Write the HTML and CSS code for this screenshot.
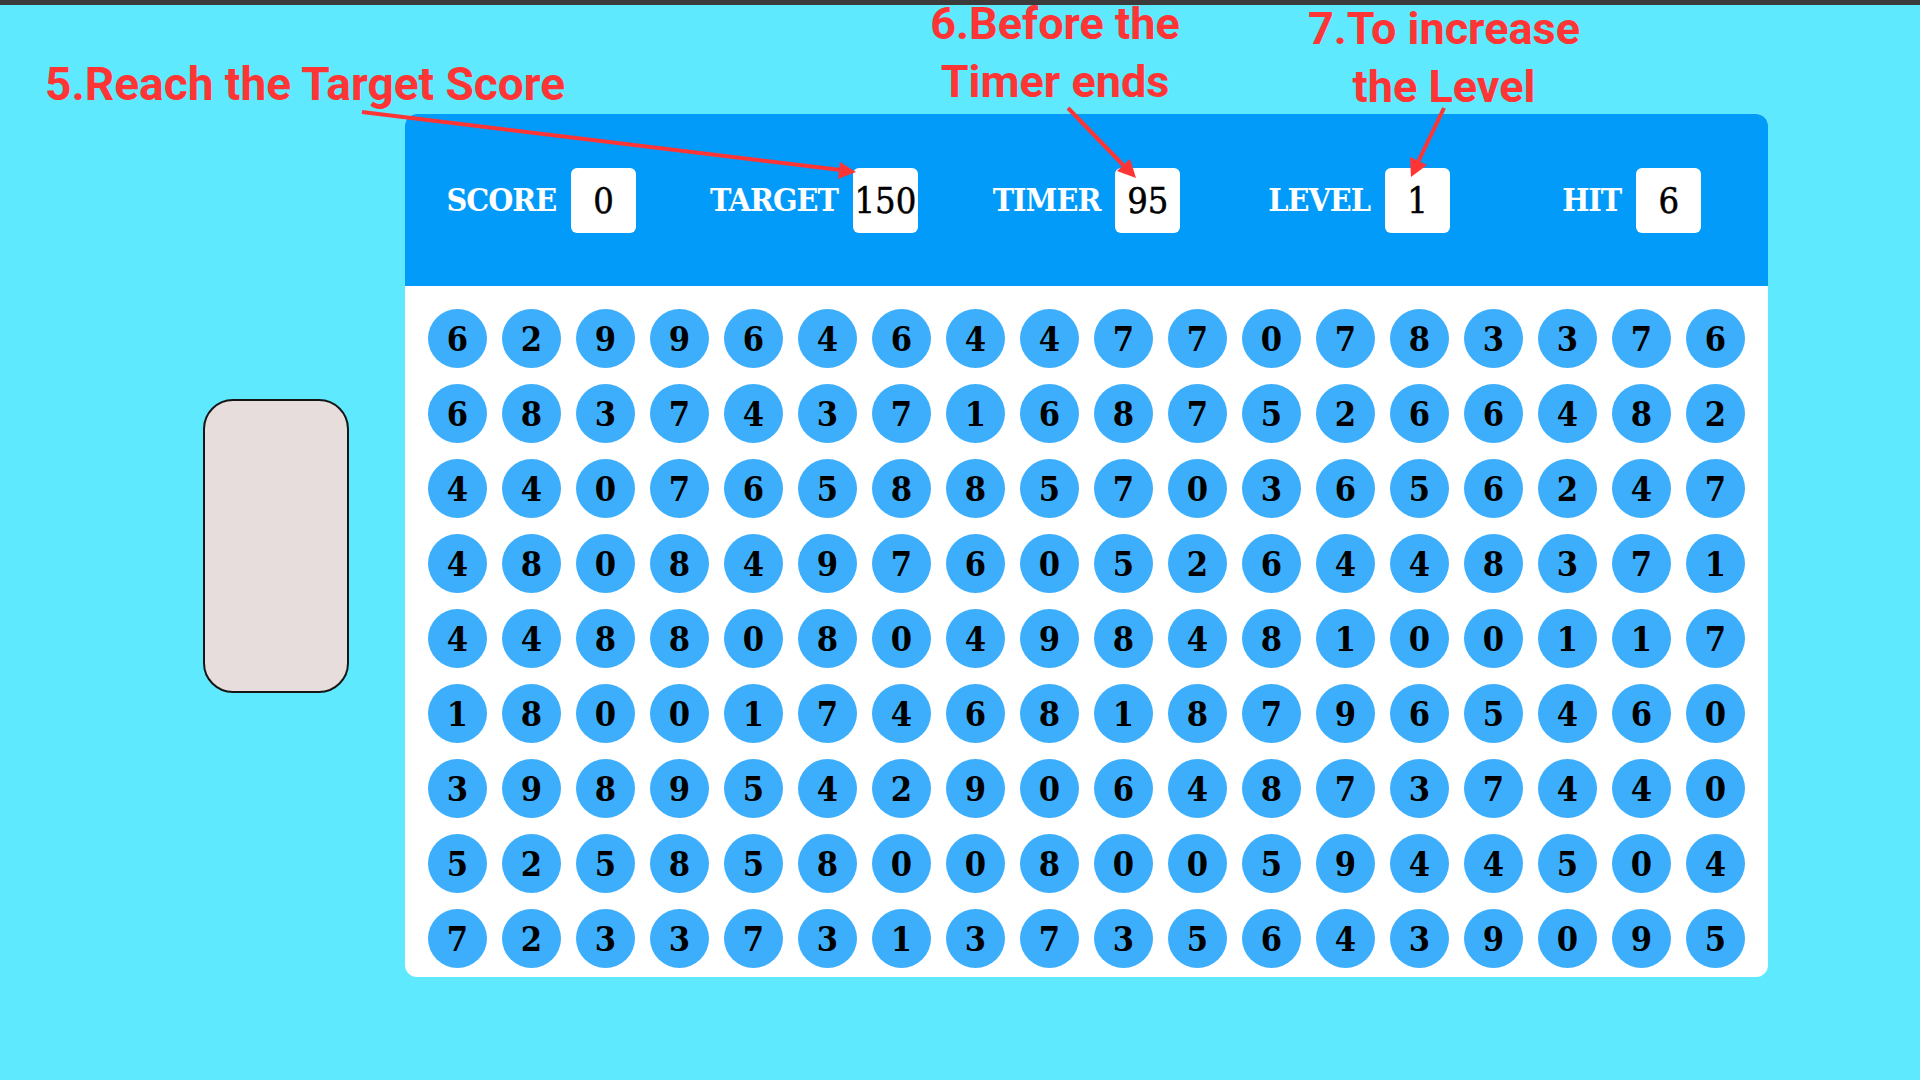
FILE: index.html
```html
<!DOCTYPE html>
<html lang="en">
<head>
  <meta charset="UTF-8" />
  <title>Number Hit</title>
  <link rel="stylesheet" href="styles.css">
</head>
<body>
  <div class="topbar"></div>

  <main class="stage">
    <div class="side-card"></div>

    <section class="board">
      <header class="stats">
        <div class="stat"><span class="stat-label">SCORE</span><span class="stat-value" id="score">0</span></div>
        <div class="stat"><span class="stat-label">TARGET</span><span class="stat-value" id="target">150</span></div>
        <div class="stat"><span class="stat-label">TIMER</span><span class="stat-value" id="timer">95</span></div>
        <div class="stat"><span class="stat-label">LEVEL</span><span class="stat-value" id="level">1</span></div>
        <div class="stat"><span class="stat-label">HIT</span><span class="stat-value" id="hit">6</span></div>
      </header>
      <div class="grid" id="grid"></div>
    </section>
  </main>

  <p class="note note-score">5.Reach the Target Score</p>
  <p class="note note-timer">6.Before the<br>Timer ends</p>
  <p class="note note-level">7.To increase<br>the Level</p>

  <svg class="arrows" width="1920" height="1080" viewBox="0 0 1920 1080">
    <line x1="362" y1="112" x2="841" y2="170" />
    <polygon points="856,172 838,179 840,162" />
    <line x1="1068" y1="108" x2="1125" y2="167" />
    <polygon points="1136,178 1117,171 1130,159" />
    <line x1="1444" y1="108" x2="1418" y2="162" />
    <polygon points="1411,177 1410,157 1427,165" />
  </svg>

  <script>
    const rows = [
      '629964644770783376',
      '683743716875266482',
      '440765885703656247',
      '480849760526448371',
      '448808049848100117',
      '180017468187965460',
      '398954290648737440',
      '525858008005944504',
      '723373137356439095'
    ];

    const grid = document.getElementById('grid');
    let html = '';
    rows.forEach(row => {
      row.split('').forEach(n => {
        html += `<div class="bubble">${n}</div>`;
      });
    });
    grid.innerHTML = html;
  </script>
</body>
</html>
```

FILE: styles.css
```css
html, body {
  margin: 0;
  height: 100%;
}
body {
  position: relative;
  width: 1920px;
  height: 1080px;
  overflow: hidden;
  background: #5ee9fe;
  font-family: 'DejaVu Serif Condensed', 'DejaVu Serif', 'Liberation Serif', serif;
}
.topbar {
  height: 5px;
  background: #3b3b3b;
}
.stage {
  display: flex;
  align-items: center;
  gap: 56px;
  padding: 109px 0 0 203px;
}
.side-card {
  width: 146px;
  height: 294px;
  box-sizing: border-box;
  background: #e7dddd;
  border: 2px solid #161616;
  border-radius: 30px;
}
.board {
  width: 1363px;
  background: white;
  border-radius: 12px;
  overflow: hidden;
}
.stats {
  display: flex;
  height: 172px;
  background: #029bfa;
}
.stat {
  flex: 1;
  display: flex;
  align-items: center;
  justify-content: center;
  gap: 15px;
}
.stat-label {
  color: white;
  font-weight: bold;
  font-size: 32px;
  letter-spacing: -1px;
}
.stat-value {
  display: flex;
  align-items: center;
  justify-content: center;
  min-width: 65px;
  height: 65px;
  padding: 0 1px;
  box-sizing: border-box;
  background: white;
  border-radius: 6px;
  color: #000;
  font-size: 36px;
  -webkit-text-stroke: 0.5px #000;
}
.grid {
  display: grid;
  grid-template-columns: repeat(18, 59px);
  column-gap: 15px;
  row-gap: 16px;
  padding: 23px 24px 9px 23px;
}
.bubble {
  width: 59px;
  height: 59px;
  border-radius: 50%;
  background: #3daefc;
  display: flex;
  align-items: center;
  justify-content: center;
  font-weight: bold;
  font-size: 34px;
  color: #000;
}
.note {
  position: absolute;
  margin: 0;
  font-family: 'Roboto', 'Liberation Sans', sans-serif;
  font-weight: bold;
  font-size: 45px;
  line-height: 58px;
  color: #ff3535;
  white-space: nowrap;
}
.note-score {
  left: 45px;
  top: 55px;
  font-size: 46px;
}
.note-timer {
  left: 855px;
  top: -5px;
  width: 400px;
  text-align: center;
}
.note-level {
  left: 1244px;
  top: 0;
  width: 400px;
  text-align: center;
}
.arrows {
  position: absolute;
  left: 0;
  top: 0;
  pointer-events: none;
}
.arrows line {
  stroke: #ff3535;
  stroke-width: 4;
}
.arrows polygon {
  fill: #ff3535;
}
```
